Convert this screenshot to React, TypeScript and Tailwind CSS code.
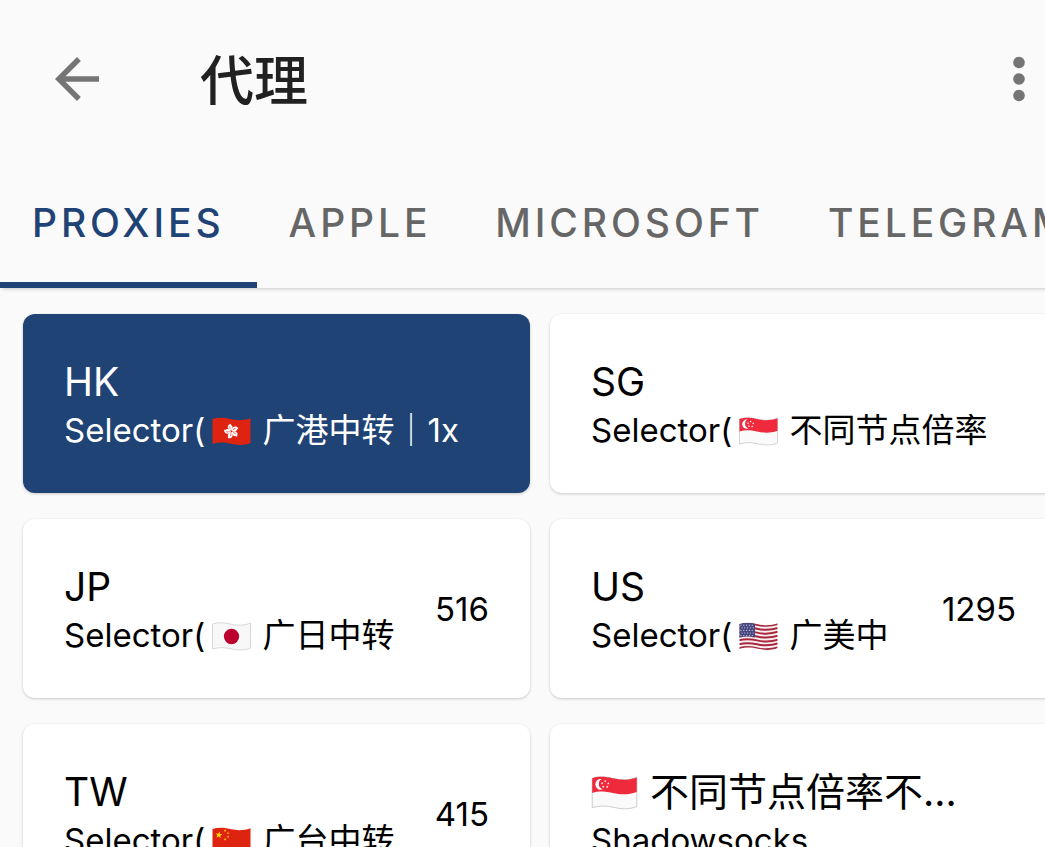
import { useState, type ReactNode } from "react";

type FlagCode = "hk" | "sg" | "jp" | "us" | "cn";

const flagNames: Record<FlagCode, string> = {
  hk: "Hong Kong",
  sg: "Singapore",
  jp: "Japan",
  us: "United States",
  cn: "China",
};

const OUTLINE =
  "M0.5 2 C6 0.2 11 0.4 18 2 S31 3.8 38.5 1.2 V26 C32 28.6 26 28.4 19 26.8 S7 25.2 0.5 27 Z";

const star = (cx: number, cy: number, r: number, turn = 0) =>
  Array.from({ length: 10 }, (_, i) => {
    const a = ((i * 36 - 90 + turn) * Math.PI) / 180;
    const d = i % 2 ? r * 0.4 : r;
    return `${(cx + d * Math.cos(a)).toFixed(2)},${(cy + d * Math.sin(a)).toFixed(2)}`;
  }).join(" ");

const wave = (y: number) =>
  `M0 ${y + 2} C6 ${y + 0.2} 11 ${y + 0.4} 18 ${y + 2} S31 ${y + 3.8} 39 ${y + 1.2}`;

function FlagArt({ code }: { code: FlagCode }) {
  if (code === "hk")
    return (
      <>
        <path d={OUTLINE} fill="#de2410" />
        {[0, 72, 144, 216, 288].map((a) => (
          <g key={a} transform={`rotate(${a - 10} 19.5 14.4)`}>
            <path d="M19.5 13.8 C15.4 12.4 15.4 7.4 20 6.8 C19.4 8.2 23.6 10 19.5 13.8 Z" fill="#fff" />
            <path d="M19.2 12.4 Q17.9 11 18.6 9.2" stroke="#de2410" strokeWidth="0.6" fill="none" />
          </g>
        ))}
      </>
    );
  if (code === "sg")
    return (
      <>
        <path d={OUTLINE} fill="#fafafa" stroke="#c9c9c9" strokeWidth="0.8" />
        <path
          d="M0.5 2 C6 0.2 11 0.4 18 2 S31 3.8 38.5 1.2 V13.7 C31 16.3 25 16 18 14.5 S6 12.7 0.5 14.5 Z"
          fill="#ee2a3c"
        />
        <path d="M8.6 2.6 A4.6 4.6 0 1 0 9.4 11.4 A4.8 4.8 0 0 1 8.6 2.6 Z" fill="#fff" />
        {[
          [11.6, 4.4],
          [14.2, 6.3],
          [13.2, 9.4],
          [9.9, 9.2],
          [9, 6.2],
        ].map(([x, y]) => (
          <polygon key={x} points={star(x, y, 1.2)} fill="#fff" />
        ))}
      </>
    );
  if (code === "jp")
    return (
      <>
        <path d={OUTLINE} fill="#f8f8f8" stroke="#cfcfcf" strokeWidth="0.8" />
        <ellipse cx="19.5" cy="14.5" rx="7.6" ry="7.8" fill="#bc002d" />
      </>
    );
  if (code === "us")
    return (
      <>
        <clipPath id="us-cloth">
          <path d={OUTLINE} />
        </clipPath>
        <g clipPath="url(#us-cloth)">
          <path d={OUTLINE} fill="#f7eff0" />
          {[0, 1, 2, 3, 4, 5, 6].map((i) => (
            <path key={i} d={wave(i * 3.9 + 0.8)} stroke="#a8283e" strokeWidth="2" fill="none" />
          ))}
          <path d="M0 1.8 C6 0.2 10 0.4 16 1.6 V15.6 C10 14.2 6 14 0 15.8 Z" fill="#46467f" />
          {[0, 1, 2, 3, 4].map((r) =>
            [0, 1, 2, 3, 4].map((c) => (
              <circle
                key={`${r}${c}`}
                cx={2 + c * 2.8 + (r % 2)}
                cy={3.2 + r * 2.6}
                r="0.6"
                fill="#d5d5e6"
              />
            )),
          )}
        </g>
      </>
    );
  return (
    <>
      <path d={OUTLINE} fill="#de2410" />
      <polygon points={star(6.9, 8, 3.6, 8)} fill="#ffde00" />
      {[
        [13, 3.6],
        [16, 6.2],
        [16, 9.8],
        [13, 12.4],
      ].map(([x, y]) => (
        <polygon key={y} points={star(x, y, 1.4, 20)} fill="#ffde00" />
      ))}
    </>
  );
}

function Flag({ code, large = false }: { code: FlagCode; large?: boolean }) {
  return (
    <svg
      viewBox="0 0 39 29"
      role="img"
      aria-label={flagNames[code]}
      className={
        large
          ? "mr-3 inline-block h-[34px] w-[47px] align-[-4px]"
          : "mr-[2px] ml-[7px] inline-block h-[29px] w-[39px] align-[-4px]"
      }
    >
      <FlagArt code={code} />
    </svg>
  );
}

type Proxy = { id: string; title: ReactNode; detail: ReactNode; delay?: number };

const proxies: Proxy[] = [
  { id: "hk", title: "HK", detail: <>Selector(<Flag code="hk" /> 广港中转｜1x</> },
  { id: "sg", title: "SG", detail: <>Selector(<Flag code="sg" /> 不同节点倍率</> },
  { id: "jp", title: "JP", detail: <>Selector(<Flag code="jp" /> 广日中转</>, delay: 516 },
  { id: "us", title: "US", detail: <>Selector(<Flag code="us" /> 广美中</>, delay: 1295 },
  { id: "tw", title: "TW", detail: <>Selector(<Flag code="cn" /> 广台中转</>, delay: 415 },
  { id: "ss", title: <><Flag code="sg" large />不同节点倍率不…</>, detail: "Shadowsocks" },
];

const tabs = ["PROXIES", "APPLE", "MICROSOFT", "TELEGRAM"];

export default function App() {
  const [tab, setTab] = useState("PROXIES");
  const [selected, setSelected] = useState("hk");

  return (
    <div className="h-screen overflow-hidden bg-[#fafafa] font-[Inter,'Noto_Sans_CJK_SC',sans-serif] text-black">
      <div className="w-[calc(100%+35px)]">
        <header className="flex h-[158px] items-center pr-[39px] pl-[44px] text-[#757575]">
          <button type="button" aria-label="Back" className="shrink-0">
            <svg viewBox="0 0 24 24" className="size-[66px]" fill="currentColor">
              <path d="M20 11H7.83l5.59-5.59L12 4l-8 8 8 8 1.41-1.41L7.83 13H20v-2z" />
            </svg>
          </button>
          <h1 className="ml-[90px] flex-1 pt-[6px] text-[54px] leading-[64px] font-medium text-[#212121]">代理</h1>
          <button type="button" aria-label="More options" className="shrink-0">
            <svg viewBox="0 0 44 66" className="h-[66px] w-[44px]" fill="currentColor">
              <circle cx="22" cy="16.5" r="5.8" />
              <circle cx="22" cy="33" r="5.8" />
              <circle cx="22" cy="49.5" r="5.8" />
            </svg>
          </button>
        </header>
        <nav
          role="tablist"
          className="flex h-[130px] overflow-x-clip shadow-[0_4px_4px_-3px_rgba(0,0,0,0.2)]"
        >
          {tabs.map((name) => (
            <button
              key={name}
              type="button"
              role="tab"
              aria-selected={tab === name}
              onClick={() => setTab(name)}
              className={
                tab === name
                  ? "shrink-0 border-b-6 border-[#1f4375] px-8 pt-[6px] text-[39px] font-medium tracking-widest text-[#1f4375]"
                  : "shrink-0 border-b-6 border-transparent px-8 pt-[6px] text-[39px] font-medium tracking-widest text-[#666]"
              }
            >
              {name}
            </button>
          ))}
        </nav>
        <main className="grid grid-cols-2 gap-x-5 gap-y-[26px] px-[23px] pt-[26px]">
          {proxies.map((p) => (
            <button
              key={p.id}
              type="button"
              aria-pressed={selected === p.id}
              onClick={() => setSelected(p.id)}
              className={
                selected === p.id
                  ? "flex h-[179px] items-center rounded-xl bg-[#1f4375] px-[41px] text-left text-white shadow-[0_1px_3px_rgba(0,0,0,0.2)]"
                  : "flex h-[179px] items-center rounded-xl bg-white px-[41px] text-left shadow-[0_1px_3px_rgba(0,0,0,0.2)]"
              }
            >
              <span className="min-w-0 flex-1 pt-1">
                <span className="block text-[39px] leading-[48px] whitespace-nowrap">{p.title}</span>
                <span className="block text-[33px] leading-[48px] whitespace-nowrap">{p.detail}</span>
              </span>
              {p.delay !== undefined && <span className="text-[33px] leading-[48px]">{p.delay}</span>}
            </button>
          ))}
        </main>
      </div>
    </div>
  );
}
